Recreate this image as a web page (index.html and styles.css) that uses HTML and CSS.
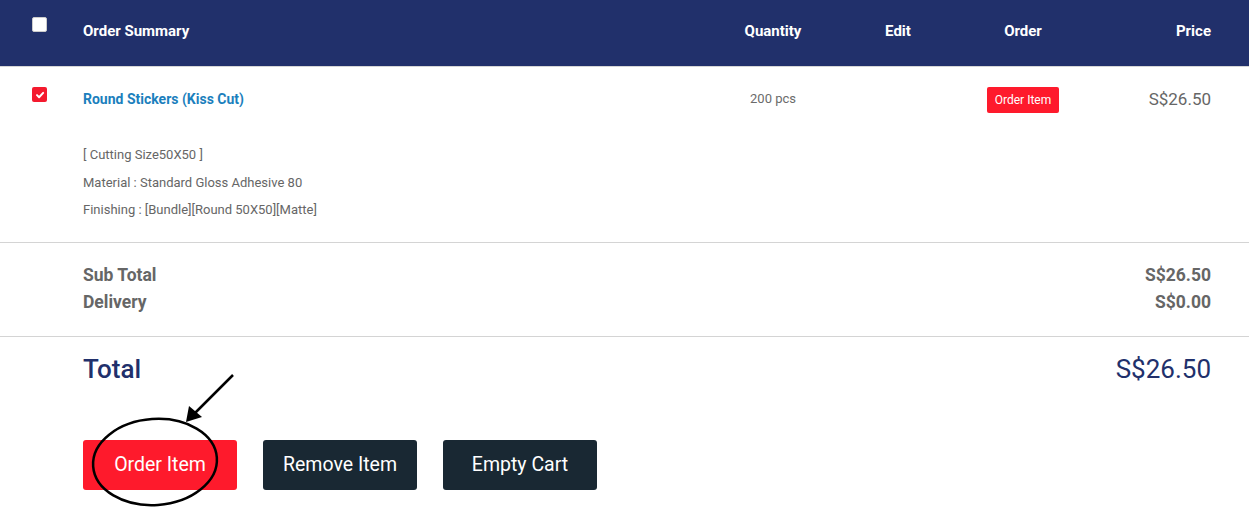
FILE: index.html
```html
<!DOCTYPE html>
<html>
<head>
<meta charset="utf-8">
<link rel="stylesheet" href="styles.css">
</head>
<body>
<div class="cart">
  <div class="row head">
    <div class="c-check"><span class="box box-white"></span></div>
    <div class="c-name">Order Summary</div>
    <div class="c-mid">Quantity</div>
    <div class="c-mid">Edit</div>
    <div class="c-mid">Order</div>
    <div class="c-price">Price</div>
  </div>
  <div class="row item">
    <div class="c-check"><span class="box box-red"><svg viewBox="0 0 16 16" width="16" height="16"><path d="M4 8.2 L6.8 11 L12.2 5.2" fill="none" stroke="#fff" stroke-width="2.6" stroke-linecap="round" stroke-linejoin="round"/></svg></span></div>
    <div class="c-name">
      <div class="pname">Round Stickers (Kiss Cut)</div>
      <div class="details">
        <div>[ Cutting Size50X50 ]</div>
        <div>Material : Standard Gloss Adhesive 80</div>
        <div>Finishing : [Bundle][Round 50X50][Matte]</div>
      </div>
    </div>
    <div class="c-mid qty">200 pcs</div>
    <div class="c-mid"></div>
    <div class="c-mid"><span class="btn-small">Order Item</span></div>
    <div class="c-price price">S$26.50</div>
  </div>
  <div class="sums">
    <div class="sum-line"><span>Sub Total</span><span>S$26.50</span></div>
    <div class="sum-line"><span>Delivery</span><span>S$0.00</span></div>
  </div>
  <div class="total">
    <div class="total-line"><span class="t-label">Total</span><span class="t-val">S$26.50</span></div>
    <div class="actions">
      <span class="btn btn-red">Order Item</span>
      <span class="btn btn-dark">Remove Item</span>
      <span class="btn btn-dark">Empty Cart</span>
    </div>
  </div>
  <svg class="annot" width="1249" height="512" viewBox="0 0 1249 512">
    <line x1="233" y1="375" x2="194" y2="414" stroke="#000" stroke-width="2.5"/>
    <polygon points="186,422 189,406 202,417" fill="#000"/>
    <ellipse cx="155" cy="462" rx="62" ry="43" transform="rotate(-4 155 462)" fill="none" stroke="#000" stroke-width="2.5"/>
  </svg>
</div>
</body>
</html>
```
FILE: styles.css
```css
html, body { margin: 0; padding: 0; background: #fff; }
body { font-family: Roboto, "Liberation Sans", sans-serif; }
.cart { position: relative; width: 1249px; height: 512px; overflow: hidden; }
.row {
  display: grid;
  grid-template-columns: 83px 1fr 125px 125px 125px 125.5px;
  padding-right: 38px;
}
.head {
  background: #21306b;
  height: 66px;
  color: #fff;
  font-weight: 700;
  font-size: 15px;
  border-bottom: 1px solid #d6d6d6;
  align-items: start;
}
.head > div { padding-top: 22px; line-height: 18px; }
.head .c-check { padding-top: 17px; }
.c-check { padding-left: 32px; }
.c-mid { text-align: center; }
.c-price { text-align: right; }
.box { display: block; width: 15px; height: 15px; border-radius: 2px; box-sizing: border-box; }
.box-white { background: #fff; border: 1px solid #ccc; }
.box-red { background: #f41a2e; display: flex; align-items: center; justify-content: center; }
.box-red svg { width: 12px; height: 12px; }
.item { height: 175px; border-bottom: 1px solid #d4d4d4; align-items: start; }
.item .c-check { padding-top: 20px; }
.pname { font-size: 14px; font-weight: 700; color: #1b7fbd; margin-top: 23px; line-height: 18px; }
.details { margin-top: 33px; font-size: 13px; color: #666; line-height: 27.5px; }
.qty { font-size: 13px; color: #6b6b6b; padding-top: 24px; line-height: 16px; }
.btn-small {
  display: inline-block; margin-top: 20px; background: #fe1a2c; color: #fff;
  font-size: 12px; height: 26px; line-height: 26px; width: 72px; border-radius: 2px; text-align: center;
}
.price { font-size: 17px; color: #666; padding-top: 22px; line-height: 20px; font-weight: 400; }
.sums { padding: 19px 38px 25px 83px; border-bottom: 1px solid #d4d4d4; height: 49px; }
.sum-line { display: flex; justify-content: space-between; font-size: 17.5px; font-weight: 700; color: #666; line-height: 27px; }
.total { padding: 15px 38px 0 83px; }
.total-line { display: flex; justify-content: space-between; align-items: center; color: #21306b; font-size: 26px; line-height: 34px; }
.t-label { font-weight: 500; }
.t-val { font-weight: 400; }
.actions { display: flex; gap: 26px; margin-top: 54px; }
.btn {
  width: 154px; height: 50px; line-height: 50px; text-align: center; color: #fff;
  font-size: 19.5px; font-weight: 400; border-radius: 3px;
}
.btn-red { background: #fe1a2c; }
.btn-dark { background: #192833; }
.annot { position: absolute; left: 0; top: 0; pointer-events: none; }
```
